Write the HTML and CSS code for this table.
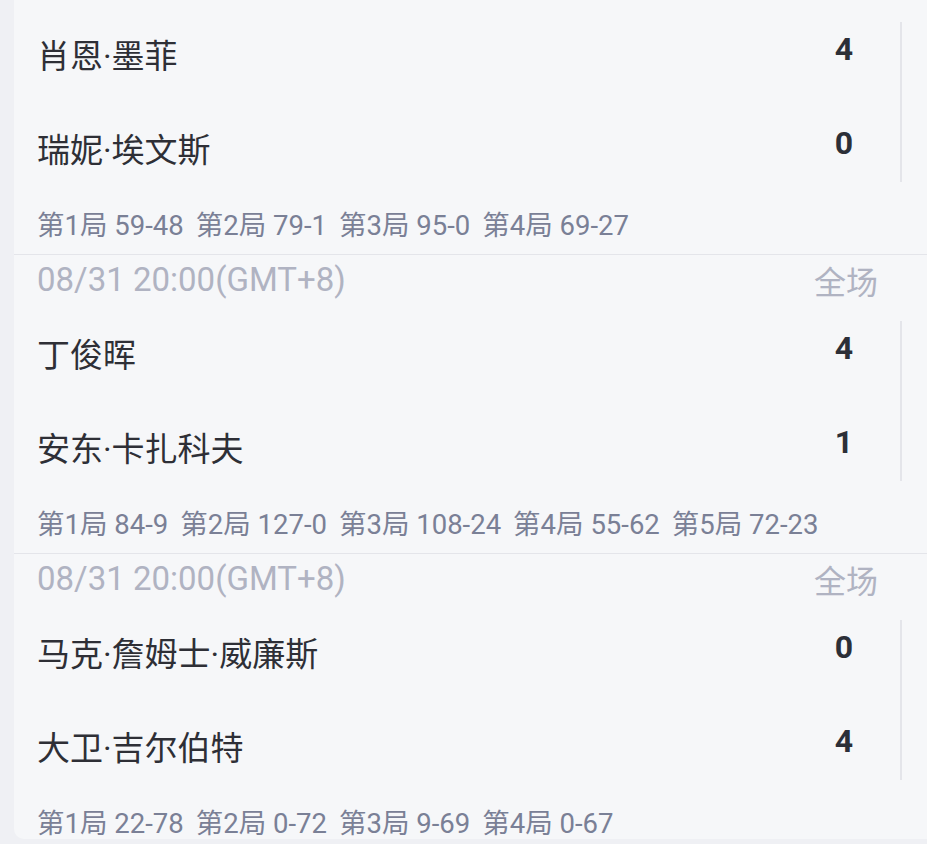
FILE: index.html
```html
<!DOCTYPE html>
<html lang="zh">
<head>
<meta charset="utf-8">
<link rel="stylesheet" href="styles.css">
</head>
<body>
<div class="card">
  <section class="match">
    <div class="head"><span>08/31 20:00(GMT+8)</span><span class="status">全场</span></div>
    <div class="teams">
      <div class="names"><div class="row">肖恩·墨菲</div><div class="row">瑞妮·埃文斯</div></div>
      <div class="scores"><div class="row">4</div><div class="row">0</div></div>
      <div class="vline"></div>
    </div>
    <div class="sets"><span>第1局 59-48</span><span>第2局 79-1</span><span>第3局 95-0</span><span>第4局 69-27</span></div>
  </section>
  <section class="match">
    <div class="head"><span>08/31 20:00(GMT+8)</span><span class="status">全场</span></div>
    <div class="teams">
      <div class="names"><div class="row">丁俊晖</div><div class="row">安东·卡扎科夫</div></div>
      <div class="scores"><div class="row">4</div><div class="row">1</div></div>
      <div class="vline"></div>
    </div>
    <div class="sets"><span>第1局 84-9</span><span>第2局 127-0</span><span>第3局 108-24</span><span>第4局 55-62</span><span>第5局 72-23</span></div>
  </section>
  <section class="match">
    <div class="head"><span>08/31 20:00(GMT+8)</span><span class="status">全场</span></div>
    <div class="teams">
      <div class="names"><div class="row">马克·詹姆士·威廉斯</div><div class="row">大卫·吉尔伯特</div></div>
      <div class="scores"><div class="row">0</div><div class="row">4</div></div>
      <div class="vline"></div>
    </div>
    <div class="sets"><span>第1局 22-78</span><span>第2局 0-72</span><span>第3局 9-69</span><span>第4局 0-67</span></div>
  </section>
</div>
</body>
</html>
```
FILE: styles.css
```css
html, body {
  margin: 0;
  padding: 0;
  background: #eff0f4;
  height: 844px;
  overflow: hidden;
}
body {
  font-family: Roboto, "Noto Sans CJK SC", sans-serif;
}
.card {
  margin: -45px 0 0 14px;
  background: #f6f7f9;
  border-radius: 0 0 0 10px;
}
.match {
  border-top: 1px solid #e4e5ea;
}
.head {
  height: 49px;
  padding: 0 49px 3px 23px;
  display: flex;
  justify-content: space-between;
  align-items: center;
  font-size: 33px;
  color: #b0b3c2;
}
.status {
  font-size: 32px;
}
.teams {
  height: 188px;
  display: flex;
  align-items: center;
}
.names {
  flex: 1;
  padding-left: 23px;
  font-family: Roboto, "Noto Sans CJK SC", sans-serif;
  font-size: 33px;
  color: #2e2f36;
}
.names .row {
  height: 91px;
  padding-bottom: 3px;
  display: flex;
  align-items: center;
}
.scores {
  width: 60px;
  margin-right: 26px;
  font-size: 32px;
  font-weight: 700;
  color: #2c2f38;
  text-align: center;
}
.scores .row {
  height: 82px;
  padding-bottom: 12px;
  display: flex;
  align-items: center;
  justify-content: center;
}
.vline {
  width: 2px;
  height: 160px;
  background: #e4e5ea;
  margin-right: 25px;
}
.sets {
  display: flex;
  gap: 12px;
  padding: 15px 0 13px 23px;
  line-height: 30px;
  font-size: 27.5px;
  color: #7a8096;
}
.match:last-child .sets {
  padding-bottom: 0;
}
```
